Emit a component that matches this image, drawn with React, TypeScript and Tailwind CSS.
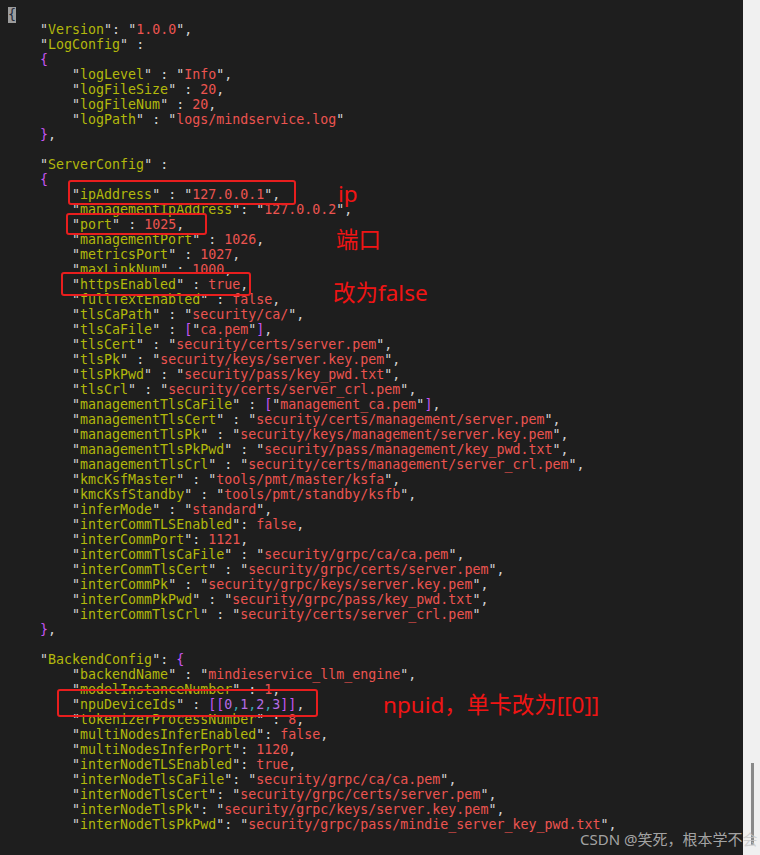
import React from 'react';

const LINES = [
  '{',
  '    "Version": "1.0.0",',
  '    "LogConfig" :',
  '    {',
  '        "logLevel" : "Info",',
  '        "logFileSize" : 20,',
  '        "logFileNum" : 20,',
  '        "logPath" : "logs/mindservice.log"',
  '    },',
  '',
  '    "ServerConfig" :',
  '    {',
  '        "ipAddress" : "127.0.0.1",',
  '        "managementIpAddress": "127.0.0.2",',
  '        "port" : 1025,',
  '        "managementPort" : 1026,',
  '        "metricsPort" : 1027,',
  '        "maxLinkNum" : 1000,',
  '        "httpsEnabled" : true,',
  '        "fullTextEnabled" : false,',
  '        "tlsCaPath" : "security/ca/",',
  '        "tlsCaFile" : ["ca.pem"],',
  '        "tlsCert" : "security/certs/server.pem",',
  '        "tlsPk" : "security/keys/server.key.pem",',
  '        "tlsPkPwd" : "security/pass/key_pwd.txt",',
  '        "tlsCrl" : "security/certs/server_crl.pem",',
  '        "managementTlsCaFile" : ["management_ca.pem"],',
  '        "managementTlsCert" : "security/certs/management/server.pem",',
  '        "managementTlsPk" : "security/keys/management/server.key.pem",',
  '        "managementTlsPkPwd" : "security/pass/management/key_pwd.txt",',
  '        "managementTlsCrl" : "security/certs/management/server_crl.pem",',
  '        "kmcKsfMaster" : "tools/pmt/master/ksfa",',
  '        "kmcKsfStandby" : "tools/pmt/standby/ksfb",',
  '        "inferMode" : "standard",',
  '        "interCommTLSEnabled": false,',
  '        "interCommPort": 1121,',
  '        "interCommTlsCaFile" : "security/grpc/ca/ca.pem",',
  '        "interCommTlsCert" : "security/grpc/certs/server.pem",',
  '        "interCommPk" : "security/grpc/keys/server.key.pem",',
  '        "interCommPkPwd" : "security/grpc/pass/key_pwd.txt",',
  '        "interCommTlsCrl" : "security/certs/server_crl.pem"',
  '    },',
  '',
  '    "BackendConfig": {',
  '        "backendName" : "mindieservice_llm_engine",',
  '        "modelInstanceNumber" : 1,',
  '        "npuDeviceIds" : [[0,1,2,3]],',
  '        "tokenizerProcessNumber" : 8,',
  '        "multiNodesInferEnabled": false,',
  '        "multiNodesInferPort": 1120,',
  '        "interNodeTLSEnabled": true,',
  '        "interNodeTlsCaFile": "security/grpc/ca/ca.pem",',
  '        "interNodeTlsCert": "security/grpc/certs/server.pem",',
  '        "interNodeTlsPk": "security/grpc/keys/server.key.pem",',
  '        "interNodeTlsPkPwd": "security/grpc/pass/mindie_server_key_pwd.txt",',
];

// tokens coloured the way the editor's json syntax does it
function CodeLine({ text, first }: { text: string; first?: boolean }) {
  if (first) {
    return (
      <div className="h-[15px] whitespace-pre">
        <span className="inline-block h-[16px] -mt-[1px] bg-[#9c9c9c] text-[#1f2a3a]">{'{'}</span>
      </div>
    );
  }
  const parts: React.ReactNode[] = [];
  const re = /"[^"]*"|true|false|\d+|[{}\[\]]|\s+|./g;
  let m: RegExpExecArray | null;
  let depth = 0;
  let i = 0;
  while ((m = re.exec(text))) {
    const t = m[0];
    const rest = text.slice(m.index + t.length);
    if (t.startsWith('"')) {
      const isKey = /^\s*:/.test(rest);
      parts.push(
        <span key={i++}>
          <span className="text-[#d4d4d4]">"</span>
          <span className={isKey ? 'text-[#b2b80c]' : 'text-[#ec5450]'}>{t.slice(1, -1)}</span>
          <span className="text-[#d4d4d4]">"</span>
        </span>
      );
    } else if (/^(true|false|\d+)$/.test(t)) {
      parts.push(
        <span key={i++} className={depth >= 2 ? 'text-[#b66ce4]' : 'text-[#ec5450]'}>
          {t}
        </span>
      );
    } else if (/[{}\[\]]/.test(t)) {
      if (t === '[') depth++;
      parts.push(
        <span key={i++} className="text-[#c655f2]">
          {t}
        </span>
      );
      if (t === ']') depth--;
    } else {
      parts.push(
        <span key={i++} className={depth >= 2 && t === ',' ? 'text-[#39a9b4]' : 'text-[#d4d4d4]'}>
          {t}
        </span>
      );
    }
  }
  return <div className="h-[15px] whitespace-pre">{parts}</div>;
}

function Box({ className }: { className: string }) {
  return <div className={`absolute border-[2.5px] border-[#e81e1e] rounded-[3px] ${className}`} />;
}

function Note({ className, children }: { className: string; children: React.ReactNode }) {
  return (
    <div
      className={`absolute text-[22.5px] leading-none text-[#f01414] whitespace-nowrap ${className}`}
      style={{ fontFamily: '"Noto Sans", "Noto Sans CJK SC", sans-serif' }}
    >
      {children}
    </div>
  );
}

export default function App() {
  return (
    <div className="flex w-[760px] h-[855px] bg-[#1e1e1e] overflow-hidden">
      <div
        className="relative flex-1 pt-[7px] pl-[8px] text-[13.3px] leading-[15px]"
        style={{ fontFamily: '"DejaVu Sans Mono", monospace' }}
      >
        {LINES.map((l, idx) => (
          <CodeLine key={idx} text={l} first={idx === 0} />
        ))}

        {/* annotation boxes drawn over the code */}
        <Box className="left-[68px] top-[180px] w-[228px] h-[25px]" />
        <Box className="left-[66px] top-[213px] w-[141px] h-[22px]" />
        <Box className="left-[61px] top-[272px] w-[190px] h-[24px]" />
        <Box className="left-[57px] top-[689px] w-[261px] h-[28px]" />

        <Note className="left-[338px] top-[183px]">ip</Note>
        <Note className="left-[336px] top-[229px]">端口</Note>
        <Note className="left-[333px] top-[282px]">改为false</Note>
        <Note className="left-[383px] top-[694px]">npuid，单卡改为[[0]]</Note>

        <div
          className="absolute left-[580px] top-[832px] text-[15px] leading-none text-[#c8c8c8]/80 whitespace-nowrap"
          style={{ fontFamily: '"Noto Sans", "Noto Sans CJK SC", sans-serif' }}
        >
          CSDN @笑死，根本学不会
        </div>
      </div>
      <div className="w-[17px] bg-[#f0f0f0] flex flex-col justify-end items-center pb-[10px]">
        <div className="w-[3px] h-[82px] bg-[#8a8a8a] ml-[1px]" />
      </div>
    </div>
  );
}
